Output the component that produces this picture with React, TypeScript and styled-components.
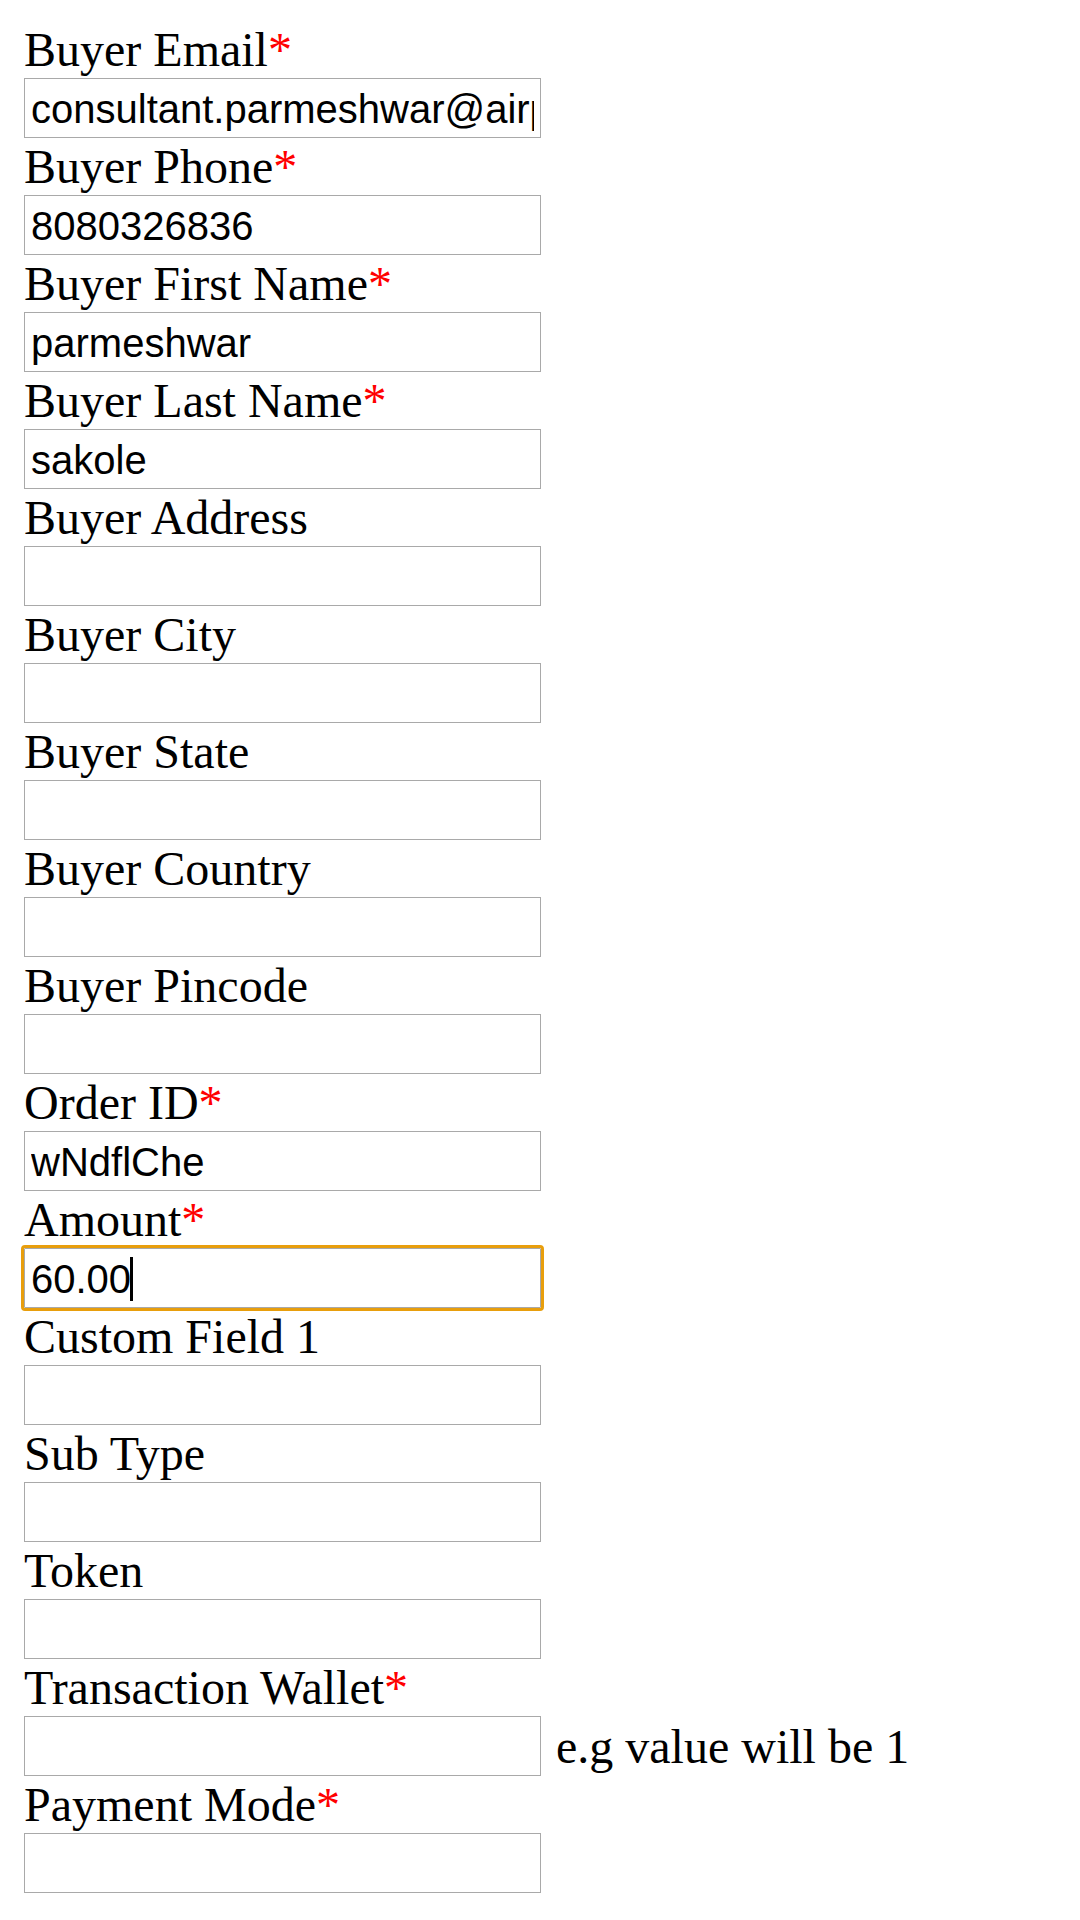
import React from "react";
import styled, { createGlobalStyle, css } from "styled-components";

const GlobalStyle = createGlobalStyle`
  html, body {
    margin: 0;
    padding: 0;
    background: #ffffff;
  }
  body {
    font-family: "Liberation Serif", "Times New Roman", serif;
    color: #000000;
  }
`;

const Form = styled.form`
  display: flex;
  flex-direction: column;
  padding: 21px 0 0 24px;
`;

const Field = styled.div`
  display: flex;
  flex-direction: column;
`;

const Label = styled.label`
  font-family: "Liberation Serif", "Times New Roman", serif;
  font-size: 48px;
  line-height: 57px;
  height: 57px;
  color: #000000;
  white-space: nowrap;
`;

const Required = styled.span`
  color: #ff0000;
`;

const Row = styled.div`
  display: flex;
  align-items: center;
  gap: 15px;
  height: 60px;
`;

const InputWrap = styled.div`
  position: relative;
  width: 517px;
  height: 60px;
  flex: none;
`;

const Input = styled.input<{ $focused?: boolean }>`
  box-sizing: border-box;
  width: 100%;
  height: 100%;
  margin: 0;
  padding: 2px 6px 0 6px;
  border: 1px solid #a9a9a9;
  border-radius: 0;
  background: #ffffff;
  font-family: "Liberation Sans", Arial, sans-serif;
  font-size: 40px;
  color: #000000;
  outline: none;
  ${(p) =>
    p.$focused &&
    css`
      border-radius: 1px;
      outline: 3px solid #e89e0c;
      outline-offset: 0;
    `}
`;

const Caret = styled.span`
  position: absolute;
  top: 9px;
  width: 3px;
  height: 44px;
  background: #000000;
`;

const Hint = styled.span`
  font-family: "Liberation Serif", "Times New Roman", serif;
  font-size: 48px;
  line-height: 57px;
  color: #000000;
  white-space: nowrap;
`;

type FieldDef = {
  label: string;
  value?: string;
  required?: boolean;
  focused?: boolean;
  hint?: string;
};

const fields: FieldDef[] = [
  { label: "Buyer Email", value: "consultant.parmeshwar@airpay.co.in", required: true },
  { label: "Buyer Phone", value: "8080326836", required: true },
  { label: "Buyer First Name", value: "parmeshwar", required: true },
  { label: "Buyer Last Name", value: "sakole", required: true },
  { label: "Buyer Address" },
  { label: "Buyer City" },
  { label: "Buyer State" },
  { label: "Buyer Country" },
  { label: "Buyer Pincode" },
  { label: "Order ID", value: "wNdflChe", required: true },
  { label: "Amount", value: "60.00", required: true, focused: true },
  { label: "Custom Field 1" },
  { label: "Sub Type" },
  { label: "Token" },
  { label: "Transaction Wallet", required: true, hint: "e.g value will be 1" },
  { label: "Payment Mode", required: true },
];

export default function App() {
  return (
    <>
      <GlobalStyle />
      <Form onSubmit={(e) => e.preventDefault()}>
        {fields.map((f) => (
          <Field key={f.label}>
            <Label>
              {f.label}
              {f.required && <Required>*</Required>}
            </Label>
            <Row>
              <InputWrap>
                <Input
                  type="text"
                  defaultValue={f.value ?? ""}
                  $focused={f.focused}
                  readOnly
                />
                {f.focused && <Caret style={{ left: 106 }} />}
              </InputWrap>
              {f.hint && <Hint>{f.hint}</Hint>}
            </Row>
          </Field>
        ))}
      </Form>
    </>
  );
}
